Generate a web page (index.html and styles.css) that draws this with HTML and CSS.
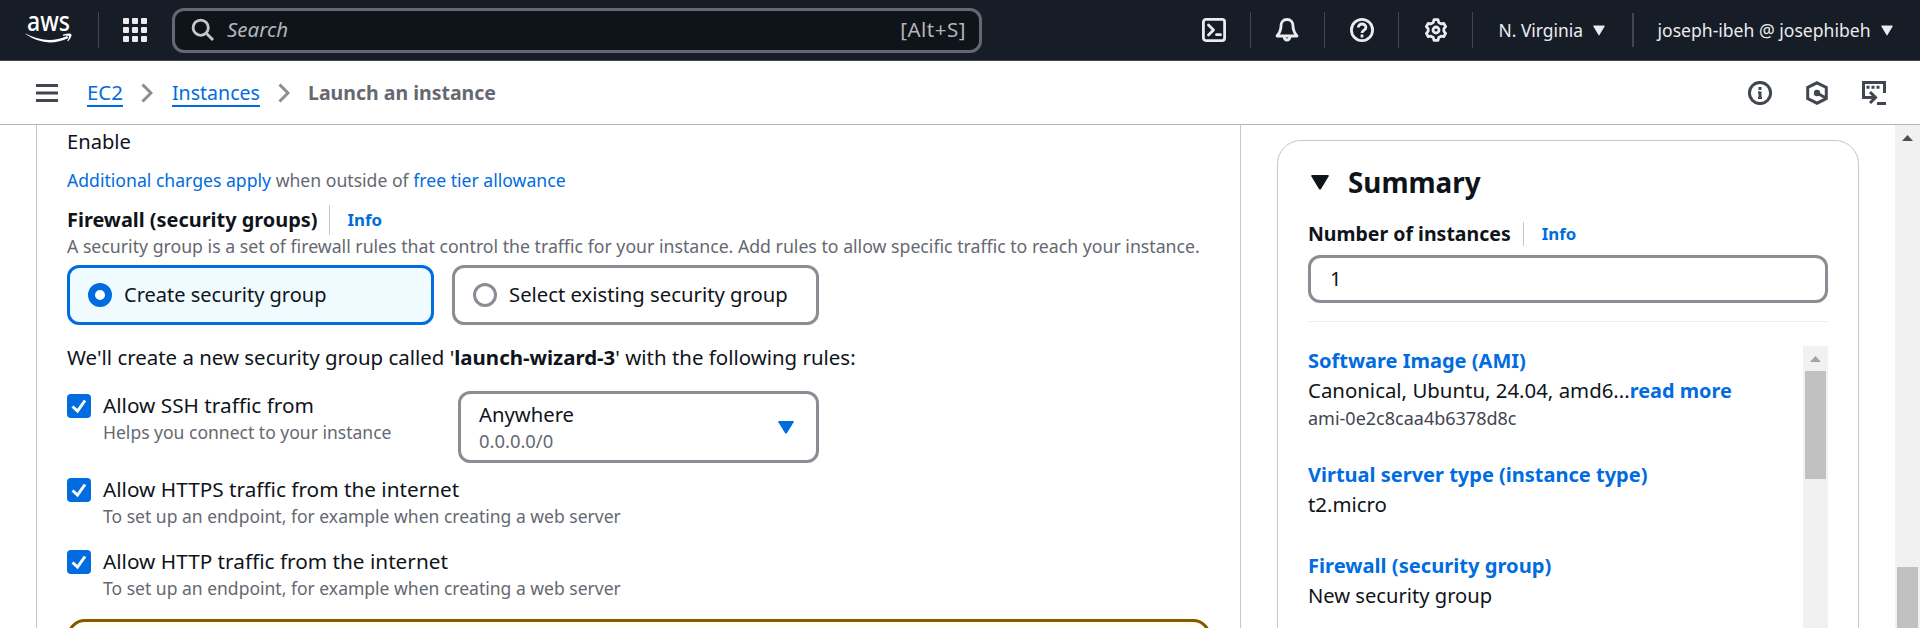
FILE: index.html
```html
<!DOCTYPE html>
<html lang="en">
<head>
<meta charset="utf-8">
<title>Launch an instance | EC2</title>
<link rel="stylesheet" href="styles.css">
</head>
<body>
<header class="topnav">
  <svg class="logo" width="50" height="34" viewBox="0 0 50 34"><text x="2" y="18" textLength="43" lengthAdjust="spacingAndGlyphs" class="logo-text">aws</text><path d="M0.500 20.500 Q22 32 42 23 L43.500 25 Q21 35.500 0.500 21.100Z"/><path d="M38 21.500 Q45 19.700 46.300 21 Q47.300 23.500 43.200 28.300 L42.300 27.800 Q44.600 24 43.800 23 Q42 22.300 38 22.700Z"/></svg>
  <span class="sep"></span>
  <svg class="apps" width="24" height="24" viewBox="0 0 24 24"><g id="row"><rect width="6" height="6" rx="1"/><rect x="9" width="6" height="6" rx="1"/><rect x="18" width="6" height="6" rx="1"/></g><use href="#row" y="9"/><use href="#row" y="18"/></svg>
  <div class="search">
    <svg class="line" width="24" height="24" viewBox="0 0 24 24"><circle cx="9.700" cy="9.700" r="7.600"/><path d="M15 15l7 7"/></svg>
    <span class="placeholder">Search</span>
    <span class="kbd">[Alt+S]</span>
  </div>
  <div class="tools">
    <svg class="line" width="24" height="24" viewBox="0 0 24 24"><rect x="1.400" y="1.400" width="21.200" height="21.200" rx="2.500"/><path d="M6.500 7l5 5-5 5M14.500 16.700h4"/></svg>
    <span class="sep"></span>
    <svg class="line" width="24" height="24" viewBox="0 0 24 24"><path d="M12 1.500c-4 0-6 2.800-6 6.500 0 5-1.500 7-4 10h20c-2.500-3-4-5-4-10 0-3.700-2-6.500-6-6.500zM9 18.500a3 3.500 0 0 0 6 0"/></svg>
    <span class="sep"></span>
    <svg class="line" width="24" height="24" viewBox="0 0 24 24"><circle cx="12" cy="12" r="10.600"/><path class="butt" d="M8.300 9.600c0-4.800 7.600-4.700 7.600-.2 0 2.800-3.900 2.700-3.900 5.600M12 16.500v2.900"/></svg>
    <span class="sep"></span>
    <svg class="line" width="24" height="24" viewBox="0 0 24 24"><path d="M10.050 1.600L13.950 1.600 14.740 4.480 17.140 5.870 19.700 5.310 21.640 8.680 19.880 10.610 19.880 13.390 21.640 15.320 19.700 18.690 17.140 18.130 14.740 19.520 13.950 22.400 10.050 22.400 9.260 19.520 6.860 18.130 4.300 18.690 2.360 15.320 4.120 13.390 4.120 10.610 2.360 8.680 4.300 5.310 6.860 5.870 9.260 4.480z"/><circle cx="12" cy="12" r="3"/></svg>
    <span class="sep"></span>
  </div>
  <span class="menu region">N. Virginia</span>
  <svg class="caret" width="12" height="11" viewBox="0 0 12 11"><path d="M1 .5h10q1 0 .6 1L6.500 10q-.5.800-1 0L.4 1.500Q0 .5 1 .5z"/></svg>
  <span class="sep wide"></span>
  <span class="menu user">joseph-ibeh @ josephibeh</span>
  <svg class="caret" width="12" height="11" viewBox="0 0 12 11"><path d="M1 .5h10q1 0 .6 1L6.500 10q-.5.800-1 0L.4 1.500Q0 .5 1 .5z"/></svg>
</header>

<nav class="crumbs">
  <svg class="burger" width="22" height="18" viewBox="0 0 22 18"><path d="M0 1.500h22M0 9h22M0 16.500h22"/></svg>
  <a class="crumb c1">EC2</a>
  <svg class="chev" width="12" height="20" viewBox="0 0 12 20"><path d="M1.500 1.500l8.500 8.500-8.500 8.500"/></svg>
  <a class="crumb c2">Instances</a>
  <svg class="chev" width="12" height="20" viewBox="0 0 12 20"><path d="M1.500 1.500l8.500 8.500-8.500 8.500"/></svg>
  <span class="current">Launch an instance</span>
  <div class="panel-icons">
    <svg width="24" height="24" viewBox="0 0 24 24"><circle cx="12" cy="12" r="10.600"/><path d="M12 6v3M12 10.500v7.500"/><path class="thin" d="M10 11.500h2M10 17h4"/></svg>
    <svg width="24" height="24" viewBox="0 0 24 24"><path d="M12 1.800l9.300 4.700v11l-9.300 4.700-9.300-4.700v-11zM12 12l8 4.500"/><circle class="dot" cx="12" cy="12" r="3.200"/></svg>
    <svg width="24" height="24" viewBox="0 0 24 24"><path d="M7 16.500H1.500v-15h21v10.500M6 16.500h7M8 11l5.500 5.500-5.500 5.500M15 22.500h9"/><path class="dots" d="M4.500 6.200h13"/></svg>
  </div>
</nav>

<div class="page">
  <main class="form">
    <p class="enable">Enable</p>
    <p class="small charges"><a>Additional charges apply</a> when outside of <a>free tier allowance</a></p>
    <div class="label fw"><b>Firewall (security groups)</b><a class="info">Info</a></div>
    <p class="small desc">A security group is a set of firewall rules that control the traffic for your instance. Add rules to allow specific traffic to reach your instance.</p>
    <div class="tiles">
      <div class="tile on"><span class="radio"></span><span>Create security group</span></div>
      <div class="tile existing"><span class="radio"></span><span class="tile-name">Select existing security group</span></div>
    </div>
    <p class="note">We'll create a new security group called '<b>launch-wizard-3</b>' with the following rules:</p>
    <div class="rule ssh">
      <svg class="check" width="24" height="24" viewBox="0 0 24 24"><path d="M5.500 12.500l5 4.500L18 6.500"/></svg>
      <div class="rule-text"><div class="rule-name">Allow SSH traffic from</div><div class="small">Helps you connect to your instance</div></div>
      <div class="select">
        <div><div class="choice">Anywhere</div><div class="small cidr">0.0.0.0/0</div></div>
        <svg width="16" height="13" viewBox="0 0 16 13"><path d="M1 0h14q1.200 0 .6 1.200L9 12q-1 1.300-2 0L.4 1.200Q-.2 0 1 0z"/></svg>
      </div>
    </div>
    <div class="rule">
      <svg class="check" width="24" height="24" viewBox="0 0 24 24"><path d="M5.500 12.500l5 4.500L18 6.500"/></svg>
      <div class="rule-text"><div class="rule-name">Allow HTTPS traffic from the internet</div><div class="small">To set up an endpoint, for example when creating a web server</div></div>
    </div>
    <div class="rule">
      <svg class="check" width="24" height="24" viewBox="0 0 24 24"><path d="M5.500 12.500l5 4.500L18 6.500"/></svg>
      <div class="rule-text"><div class="rule-name">Allow HTTP traffic from the internet</div><div class="small">To set up an endpoint, for example when creating a web server</div></div>
    </div>
    <div class="alert"></div>
  </main>
  <aside class="summary">
    <h2><svg width="18" height="15" viewBox="0 0 18 15"><path d="M1.200 0h15.600q1.500 0 .8 1.400L10 14q-1 1.500-2 0L.4 1.400Q-.3 0 1.200 0z"/></svg><span>Summary</span></h2>
    <div class="label num"><b>Number of instances</b><a class="info">Info</a></div>
    <div class="input">1</div>
    <div class="scroller">
      <div class="items">
        <div class="item"><a>Software Image (AMI)</a><div class="value">Canonical, Ubuntu, 24.04, amd6...<a class="more">read more</a></div><div class="small ami">ami-0e2c8caa4b6378d8c</div></div>
        <div class="item"><a>Virtual server type (instance type)</a><div class="value">t2.micro</div></div>
        <div class="item"><a class="wider">Firewall (security group)</a><div class="value group">New security group</div></div>
      </div>
      <div class="bar inner"><svg width="11" height="6" viewBox="0 0 11 6"><path d="M0 6L5.500 0 11 6z"/></svg><i class="thumb"></i></div>
    </div>
  </aside>
  <div class="bar outer"><svg width="11" height="6" viewBox="0 0 11 6"><path d="M0 6L5.500 0 11 6z"/></svg><i class="thumb"></i></div>
</div>
</body>
</html>
```
FILE: styles.css
```css
* { box-sizing: border-box; }
body { margin: 0; width: 1920px; height: 628px; overflow: hidden; background: #fff; color: #0f141a; font: 20px/30px "Noto Sans", sans-serif; white-space: nowrap; }
p, h2 { margin: 0; }
a { color: #006ce0; text-decoration: none; }
svg { display: block; flex: none; }

.topnav { display: flex; align-items: center; height: 61px; background: #161d26; border-bottom: 1px solid #424650; color: #ebebf0; fill: #ebebf0; }
.logo { margin-left: 25px; fill: #fff; overflow: visible; }
.logo-text { font: 500 27px "Noto Sans", sans-serif; }
.sep { flex: none; width: 1px; height: 36px; background: #424650; }
.sep.wide { width: 2px; height: 34px; margin-left: 27px; }
.logo + .sep { margin-left: 23px; }
.apps { margin-left: 24px; }
.search { display: flex; align-items: center; width: 810px; height: 45px; margin-left: 25px; padding: 0 13px 0 16px; border: 3px solid #656871; border-radius: 12px; background: #0f141a; color: #b4b4bb; line-height: 28px; }
.line { fill: none; stroke: #ebebf0; stroke-width: 2.8; stroke-linejoin: round; stroke-linecap: round; }
.search .line { stroke: #c6c6cd; stroke-linecap: butt; }
.butt { stroke-linecap: butt; }
.placeholder { margin-left: 12px; padding-bottom: 2px; font-style: italic; font-size: 20.5px; }
.kbd { margin-left: auto; padding-bottom: 2px; font-size: 20.5px; letter-spacing: .5px; }
.tools { display: flex; align-items: center; gap: 24.5px; margin-left: 220px; }
.tools .sep { margin: 0 .5px 0 -.5px; }
.tools .line:nth-child(3) { margin: 0 1px 0 -1px; }
.region { margin-left: 25px; width: 86px; font-size: 17.4px; }
.user { margin-left: 24px; width: 214px; font-size: 17.57px; }
.caret { margin-left: 8px; }
.user + .caret { margin-left: 9px; }

.crumbs { display: flex; align-items: center; height: 64px; padding: 1px 34px 0 36px; border-bottom: 1px solid #b4b4bb; }
.burger { stroke: #424650; stroke-width: 3; }
.crumb { border-bottom: 2px solid #006ce0; height: 28px; line-height: 27px; }
.c1 { margin-left: 29px; width: 36px; font-size: 20.4px; }
.c2 { margin-left: 19px; width: 88px; font-size: 19.55px; }
.chev { margin-left: 18px; fill: none; stroke: #8c8c94; stroke-width: 3; }
.current { margin-left: 18px; font-weight: 700; font-size: 19.5px; color: #656871; }
.panel-icons { display: flex; gap: 33px; margin-left: auto; fill: none; stroke: #424650; stroke-width: 3; }
.dot { fill: #424650; stroke: none; }
.dots { stroke-dasharray: 3 2; }
.thin { stroke-width: 2; }

.page { display: flex; height: 503px; overflow: hidden; }
.form { width: 1205px; height: 503px; margin-left: 36px; padding: 1px 29px 0 30px; border: solid #c6c6cd; border-width: 0 1px; }
.enable { font-size: 20.15px; }
.small { font-size: 17.53px; line-height: 24px; color: #656871; }
.charges { margin-top: 12px; font-size: 17.62px; }
.label { display: flex; align-items: center; }
.info { display: flex; align-items: center; height: 30px; margin-left: 12px; padding-left: 18px; border-left: 1px solid #c6c6cd; font-size: 16.8px; font-weight: 700; }
.fw { margin-top: 13px; font-size: 19.92px; }
.fw .info { margin-left: 11px; }
.desc { margin-top: -1px; font-size: 17.7px; }
.tiles { display: flex; gap: 18px; margin-top: 7px; }
.tile { display: flex; align-items: center; gap: 12px; width: 367px; height: 60px; padding-left: 18px; border: 3px solid #8c8c94; border-radius: 12px; }
.tile.on { border-color: #006ce0; background: #f0fbff; }
.existing { font-size: 20.3px; }
.tile-name { padding-bottom: 2px; }
.radio { width: 24px; height: 24px; border: 3px solid #8c8c94; border-radius: 50%; background: #fff; }
.on .radio { border: 7px solid #006ce0; }
.note { margin-top: 17px; font-size: 20.45px; }
.rule { display: flex; height: 72px; padding-top: 6px; }
.rule-text { width: 355px; margin: -4px 0 0 12px; }
.rule-name { font-size: 20.75px; }
.check { border-radius: 4px; background: #006ce0; fill: none; stroke: #fff; stroke-width: 3; }
.ssh { margin-top: 16px; height: 84px; }
.select { display: flex; align-items: center; justify-content: space-between; width: 361px; height: 72px; margin-top: -3px; padding: 0 22px 0 18px; border: 3px solid #8c8c94; border-radius: 12px; }
.select > div { padding-bottom: 2px; }
.select svg { fill: #006ce0; }
.choice { font-size: 20.25px; }
.cidr { font-size: 18.4px; }
.alert { height: 60px; margin-top: 3px; border: 3px solid #855900; border-radius: 18px; background: #fffef0; }

.summary { width: 582px; height: 560px; margin: 15px 0 0 36px; padding: 25px 30px 0; border: 1px solid #c6c6cd; border-radius: 24px; }
h2 { display: flex; align-items: center; gap: 19px; height: 32px; padding-left: 3px; font-size: 27.8px; }
h2 svg { fill: #0f141a; margin-top: 1px; }
.num { margin-top: 21px; font-size: 19.5px; }
.num .info { height: 24px; }
.input { height: 48px; margin-top: 6px; padding: 6px 19px; border: 3px solid #8c8c94; border-radius: 12px; }
.scroller { display: flex; justify-content: space-between; margin-top: 18px; padding-top: 24px; border-top: 1px solid #ebebf0; }
.item { height: 90px; }
.item:first-child { height: 114px; }
.item a { font-weight: 700; }
.item .wider { font-size: 20.15px; }
.value { margin-top: -1px; font-size: 20.4px; }
.more { font-size: 19.85px; }
.group { font-size: 20.15px; }
.ami { font-size: 18px; color: #424650; }
.bar { display: flex; flex-direction: column; align-items: center; width: 25px; background: #f1f1f1; padding-top: 10px; }
.bar svg { fill: #505050; }
.inner svg { fill: #a3a3a3; }
.thumb { width: 21px; height: 108px; margin-top: 9px; background: #c1c1c1; }
.inner { height: 300px; }
.outer { margin-left: auto; height: 503px; }
.outer .thumb { height: 61px; margin-top: 426px; }
```
